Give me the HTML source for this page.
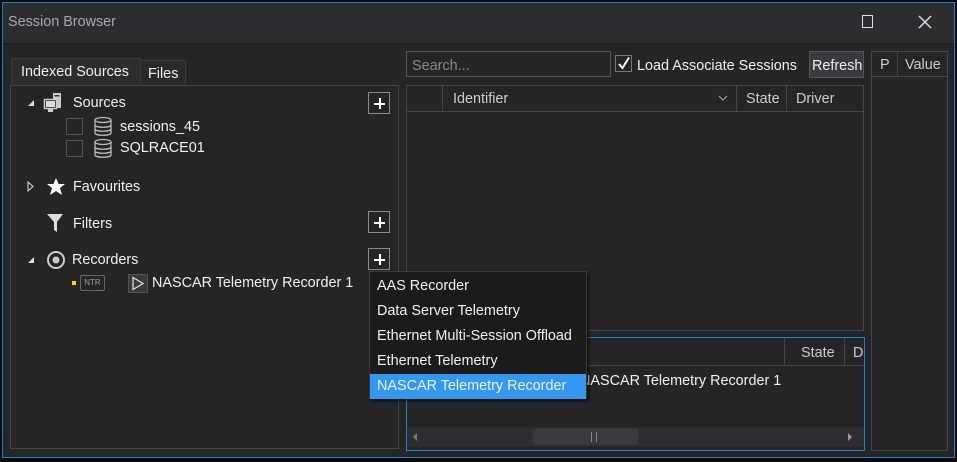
<!DOCTYPE html>
<html><head><meta charset="utf-8"><style>
*{margin:0;padding:0;box-sizing:border-box}
body{width:957px;height:462px;background:#0a0a0a;font-family:"Liberation Sans",sans-serif;color:#f0f0f0;font-size:14px;position:relative;overflow:hidden}
.a{position:absolute}
.win{left:2px;top:2px;width:953px;height:456px;border:1px solid #1e7fd8;background:#252526}
.title{left:3px;top:3px;width:951px;height:41px;background:#2d2d30;border-bottom:1px solid #1c1c1c}
.t{white-space:nowrap;font-size:14.4px;line-height:16px}
.box{border:1px solid #454545}
.plus{width:22px;height:22px;border:1px solid #8a8a8a;background:#252526}
.plus:before{content:"";position:absolute;left:5px;top:9.5px;width:11px;height:2px;background:#fff}
.plus:after{content:"";position:absolute;left:9.5px;top:5px;width:2px;height:11px;background:#fff}
.cb{width:17px;height:17px;border:1px solid #555}
.menu div{height:25px;padding-left:7px;line-height:25px;font-size:14.4px;white-space:nowrap}
</style></head><body>
<div class="a win"></div>
<div class="a title"></div>
<div class="a t" style="left:8px;top:14px;color:#a8a8a8">Session Browser</div>
<div class="a" style="left:862px;top:15px;width:11px;height:13px;border:1.5px solid #ddd"></div>
<svg class="a" style="left:918px;top:15px" width="14" height="14"><path d="M1 1L13 13M13 1L1 13" stroke="#ddd" stroke-width="1.5"/></svg>

<div class="a" style="left:11px;top:58px;width:130px;height:28px;background:#2d2d30;border:1px solid #3c3c3c;border-bottom:none"></div>
<div class="a t" style="left:21px;top:64px;color:#eee">Indexed Sources</div>
<div class="a" style="left:140px;top:60px;width:46px;height:26px;border:1px solid #3c3c3c;border-bottom:none;background:#2a2a2b"></div>
<div class="a t" style="left:148px;top:66px">Files</div>
<div class="a box" style="left:10px;top:85px;width:389px;height:364px"></div>

<svg class="a" style="left:27px;top:99px" width="8" height="8"><path d="M7 1V7H1Z" fill="#ddd"/></svg>
<svg class="a" style="left:43px;top:92px" width="24" height="22"><rect x="10" y="1" width="8" height="15" fill="#ccc"/><rect x="11.5" y="3" width="5" height="1.5" fill="#333"/><rect x="1.5" y="7.5" width="12" height="9" fill="#252526" stroke="#ccc" stroke-width="1.5"/><rect x="3" y="9" width="9" height="6" fill="#ddd"/><rect x="5" y="17" width="5" height="3" fill="#ccc"/></svg>
<div class="a t" style="left:73px;top:95px">Sources</div>
<div class="a plus" style="left:368px;top:92px"></div>
<div class="a cb" style="left:66px;top:118px"></div>
<div class="a cb" style="left:66px;top:140px"></div>
<svg class="a" style="left:93px;top:116px" width="22" height="44"><g fill="none" stroke="#bbb" stroke-width="1.3"><ellipse cx="10" cy="4" rx="8" ry="2.5"/><path d="M2 4V17c0 3 16 3 16 0V4M2 9c0 3 16 3 16 0M2 13c0 3 16 3 16 0"/><ellipse cx="10" cy="26" rx="8" ry="2.5"/><path d="M2 26V39c0 3 16 3 16 0V26M2 31c0 3 16 3 16 0M2 35c0 3 16 3 16 0"/></g></svg>
<div class="a t" style="left:120px;top:119px">sessions_45</div>
<div class="a t" style="left:120px;top:140px">SQLRACE01</div>

<svg class="a" style="left:27px;top:181px" width="8" height="11"><path d="M1 1L6 5.5L1 10Z" fill="none" stroke="#ddd"/></svg>
<svg class="a" style="left:46px;top:177px" width="20" height="19"><path d="M10 1L12.6 7H19L14 11L16 18L10 14L4 18L6 11L1 7H7.4Z" fill="#fff"/></svg>
<div class="a t" style="left:73px;top:179px">Favourites</div>

<svg class="a" style="left:46px;top:213px" width="18" height="20"><path d="M1 1H17L11 9V19L8 17V9Z" fill="#ddd"/></svg>
<div class="a t" style="left:73px;top:216px">Filters</div>
<div class="a plus" style="left:368px;top:211px"></div>

<svg class="a" style="left:27px;top:256px" width="8" height="8"><path d="M7 1V7H1Z" fill="#ddd"/></svg>
<svg class="a" style="left:46px;top:250px" width="20" height="20"><circle cx="10" cy="10" r="8" fill="none" stroke="#ccc" stroke-width="2"/><circle cx="10" cy="10" r="3.5" fill="#ccc"/></svg>
<div class="a t" style="left:72px;top:252px">Recorders</div>
<div class="a plus" style="left:368px;top:248px"></div>
<div class="a" style="left:72px;top:281px;width:4px;height:4px;background:#ffd700"></div>
<div class="a" style="left:80px;top:275px;width:25px;height:16px;border:1px solid #666;border-radius:2px;font-size:8px;line-height:14px;text-align:center;color:#999">NTR</div>
<div class="a" style="left:128px;top:274px;width:20px;height:19px;background:#3a3a3c;border:1px solid #555"></div>
<svg class="a" style="left:131px;top:276px" width="14" height="15"><path d="M2 1.5L12 7.5L2 13.5Z" fill="none" stroke="#ddd" stroke-width="1.3"/></svg>
<div class="a t" style="left:152px;top:275px">NASCAR Telemetry Recorder 1</div>

<div class="a box" style="left:406px;top:51px;width:205px;height:26px;border-color:#555"></div>
<div class="a t" style="left:412px;top:58px;color:#888">Search...</div>
<div class="a" style="left:615px;top:55px;width:17px;height:17px;border:1px solid #777"></div>
<svg class="a" style="left:617px;top:56px" width="14" height="15"><path d="M2 8L5.5 12L12 1.5" fill="none" stroke="#fff" stroke-width="2"/></svg>
<div class="a t" style="left:637px;top:58px">Load Associate Sessions</div>
<div class="a" style="left:809px;top:51px;width:55px;height:27px;background:#3a3a3e;border:1px solid #555"></div>
<div class="a t" style="left:812px;top:58px">Refresh</div>

<div class="a box" style="left:406px;top:85px;width:458px;height:246px"></div>
<div class="a" style="left:407px;top:111px;width:456px;height:1px;background:#454545"></div>
<div class="a" style="left:442px;top:86px;width:1px;height:25px;background:#454545"></div>
<div class="a" style="left:736px;top:86px;width:1px;height:25px;background:#454545"></div>
<div class="a" style="left:786px;top:86px;width:1px;height:25px;background:#454545"></div>
<div class="a t" style="left:453px;top:91px;color:#ccc">Identifier</div>
<svg class="a" style="left:718px;top:95px" width="10" height="7"><path d="M1 1L5 5L9 1" fill="none" stroke="#aaa"/></svg>
<div class="a t" style="left:746px;top:91px;color:#ccc">State</div>
<div class="a t" style="left:796px;top:91px;color:#ccc">Driver</div>

<div class="a" style="left:406px;top:337px;width:459px;height:114px;border:1px solid #1e7fd8"></div>
<div class="a" style="left:407px;top:365px;width:457px;height:1px;background:#454545"></div>
<div class="a" style="left:784px;top:338px;width:1px;height:27px;background:#454545"></div>
<div class="a" style="left:844px;top:338px;width:1px;height:27px;background:#454545"></div>
<div class="a t" style="left:801px;top:345px;color:#ccc">State</div>
<div class="a t" style="left:853px;top:345px;color:#ccc">D</div>
<div class="a t" style="left:580px;top:373px">NASCAR Telemetry Recorder 1</div>
<div class="a" style="left:407px;top:427px;width:457px;height:20px;background:#2e2e30"></div>
<div class="a" style="left:533px;top:429px;width:105px;height:16px;background:#3a3a3c"></div>
<div class="a" style="left:591px;top:432px;width:6px;height:10px;border-left:1px solid #888;border-right:1px solid #888"></div>
<svg class="a" style="left:412px;top:432px" width="6" height="10"><path d="M5 1L1 5L5 9Z" fill="#777"/></svg>
<svg class="a" style="left:847px;top:432px" width="6" height="10"><path d="M1 1L5 5L1 9Z" fill="#999"/></svg>

<div class="a box" style="left:871px;top:51px;width:77px;height:400px"></div>
<div class="a" style="left:872px;top:76px;width:75px;height:1px;background:#454545"></div>
<div class="a" style="left:897px;top:52px;width:1px;height:24px;background:#454545"></div>
<div class="a t" style="left:880px;top:57px;color:#ccc">P</div>
<div class="a t" style="left:905px;top:57px;color:#ccc">Value</div>

<div class="a menu" style="left:369px;top:271px;width:218px;height:128px;background:#1b1b1c;border:1px solid #3a3a3a;box-shadow:2px 2px 3px rgba(0,0,0,.6);padding-top:2px">
<div>AAS Recorder</div><div>Data Server Telemetry</div><div>Ethernet Multi-Session Offload</div><div>Ethernet Telemetry</div><div style="background:#3399ee">NASCAR Telemetry Recorder</div>
</div>
</body></html>
